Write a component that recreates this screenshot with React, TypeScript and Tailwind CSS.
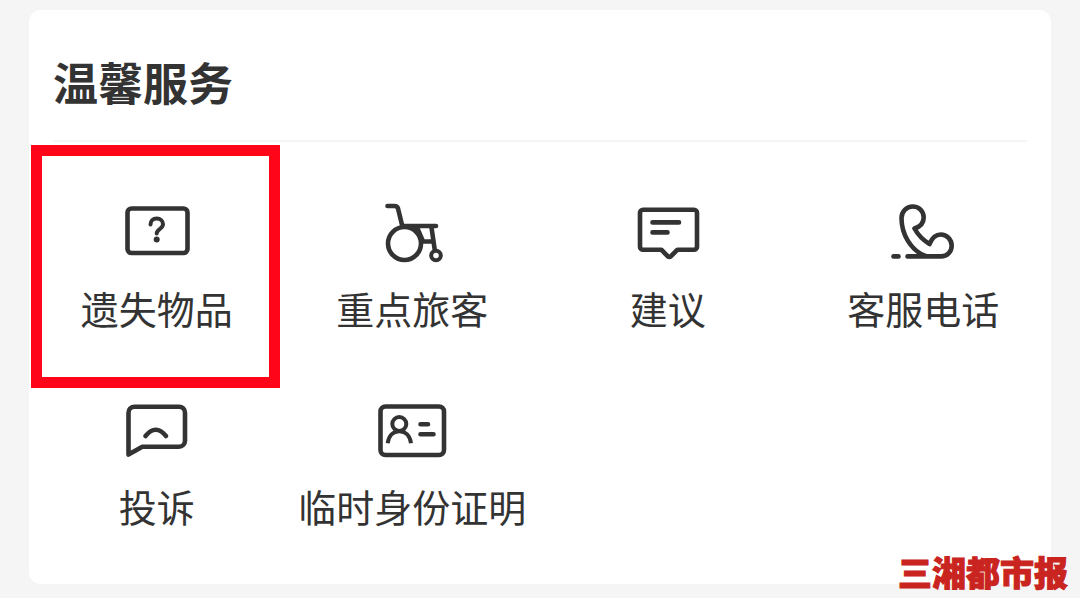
import type { ReactNode } from 'react';

interface ServiceItem {
  label: string;
  icon: ReactNode;
  highlighted?: boolean;
}

const services: ServiceItem[] = [
  {
    label: '遗失物品',
    highlighted: true,
    icon: (
      <>
        <rect x="10.5" y="8.5" width="60" height="44.5" rx="4" />
        <path
          d="M33.5 24.5c0-3.5 2.5-6 6.2-6s6.3 2.5 6.3 5.7c0 4.5-6.3 5-6.3 9.3"
          strokeWidth="4"
        />
        <circle cx="39.7" cy="39.6" r="3" fill="currentColor" stroke="none" />
      </>
    ),
  },
  {
    label: '重点旅客',
    icon: (
      <>
        <path d="M15.5 6h7c2 0 3 .8 3.5 2.5L30.3 26H64" />
        <circle cx="32.5" cy="43.5" r="16.5" />
        <path d="M45 27.500L51 41.5h10M59.5 27.5l3.200 22" />
        <circle cx="64" cy="55.5" r="4.8" strokeWidth="4" />
      </>
    ),
  },
  {
    label: '建议',
    icon: (
      <>
        <path d="M15 9.700h51a3 3 0 0 1 3 3v34a3 3 0 0 1-3 3H49.500l-6.500 6.500q-1.700 1.500-3.400 0l-6.300-6.500H15a3 3 0 0 1-3-3v-34a3 3 0 0 1 3-3z" />
        <path d="M24.5 22.4H51M24.5 32.4h15" />
      </>
    ),
  },
  {
    label: '客服电话',
    icon: (
      <>
        <path d="M24.5 56.4H58c6 0 10.7-4.6 10.7-10.7S64 34.5 57.7 34.5c-5.5 0-8.7 3.5-11.2 9.5-6.5-4-11.5-9-15-15.5 5.500-1.700 9.200-5.500 9.200-11 0-6.500-4.800-11-11-11S18.500 11.500 18.500 18c0 16.500 9.500 32.500 24 38" />
        <path d="M10.5 56.4h5" />
      </>
    ),
  },
  {
    label: '投诉',
    icon: (
      <>
        <path d="M11.5 56.5V14.7a6 6 0 0 1 6-6H62a6 6 0 0 1 6 6v28a6 6 0 0 1-6 6H25.3z" />
        <path d="M28.5 38q10.2-12.5 20.5 0" />
      </>
    ),
  },
  {
    label: '临时身份证明',
    icon: (
      <>
        <rect x="8.5" y="8.5" width="63.5" height="48.5" rx="5" />
        <circle cx="27.3" cy="26" r="7" strokeWidth="4" />
        <path
          d="M15.7 45.3c1-7.5 5.5-12 11.6-12s10.7 4.5 11.7 12"
          strokeWidth="4"
          strokeLinecap="butt"
        />
        <path d="M48.5 26.3H56M48.5 36.3h13" />
      </>
    ),
  },
];

function ServiceButton({ label, icon, highlighted }: ServiceItem) {
  return (
    <button type="button" className="relative flex flex-col items-center pt-[58px] pb-3">
      <svg
        viewBox="0 0 80 64"
        className="h-16 w-20"
        fill="none"
        stroke="currentColor"
        strokeWidth="4.6"
        strokeLinecap="round"
        strokeLinejoin="round"
        aria-hidden="true"
      >
        {icon}
      </svg>
      <span className="mt-6 text-[38px] leading-10 whitespace-nowrap">{label}</span>
      {highlighted && (
        <span className="pointer-events-none absolute top-[3px] right-[5px] -bottom-12 left-0.5 border-[11px] border-[#ff0519]" />
      )}
    </button>
  );
}

export default function App() {
  return (
    <main className="relative min-h-screen bg-[#f5f5f5] px-[29px] pt-2.5 pb-3.5 font-['Noto_Sans_CJK_SC',sans-serif] text-[#333333]">
      <section className="rounded-xl bg-white pb-[46px]">
        <header className="mx-6 border-b-2 border-[#f5f5f5] pt-11 pb-[30px]">
          <h1 className="text-[45px] leading-14 font-bold">温馨服务</h1>
        </header>
        <div className="grid grid-cols-4">
          {services.map((service) => (
            <ServiceButton key={service.label} {...service} />
          ))}
        </div>
      </section>

      <p className="absolute right-3 bottom-1.5 text-[34px] leading-10 font-black text-[#c92420] [-webkit-text-stroke:1px_#c92420]">
        三湘都市报
      </p>
    </main>
  );
}
